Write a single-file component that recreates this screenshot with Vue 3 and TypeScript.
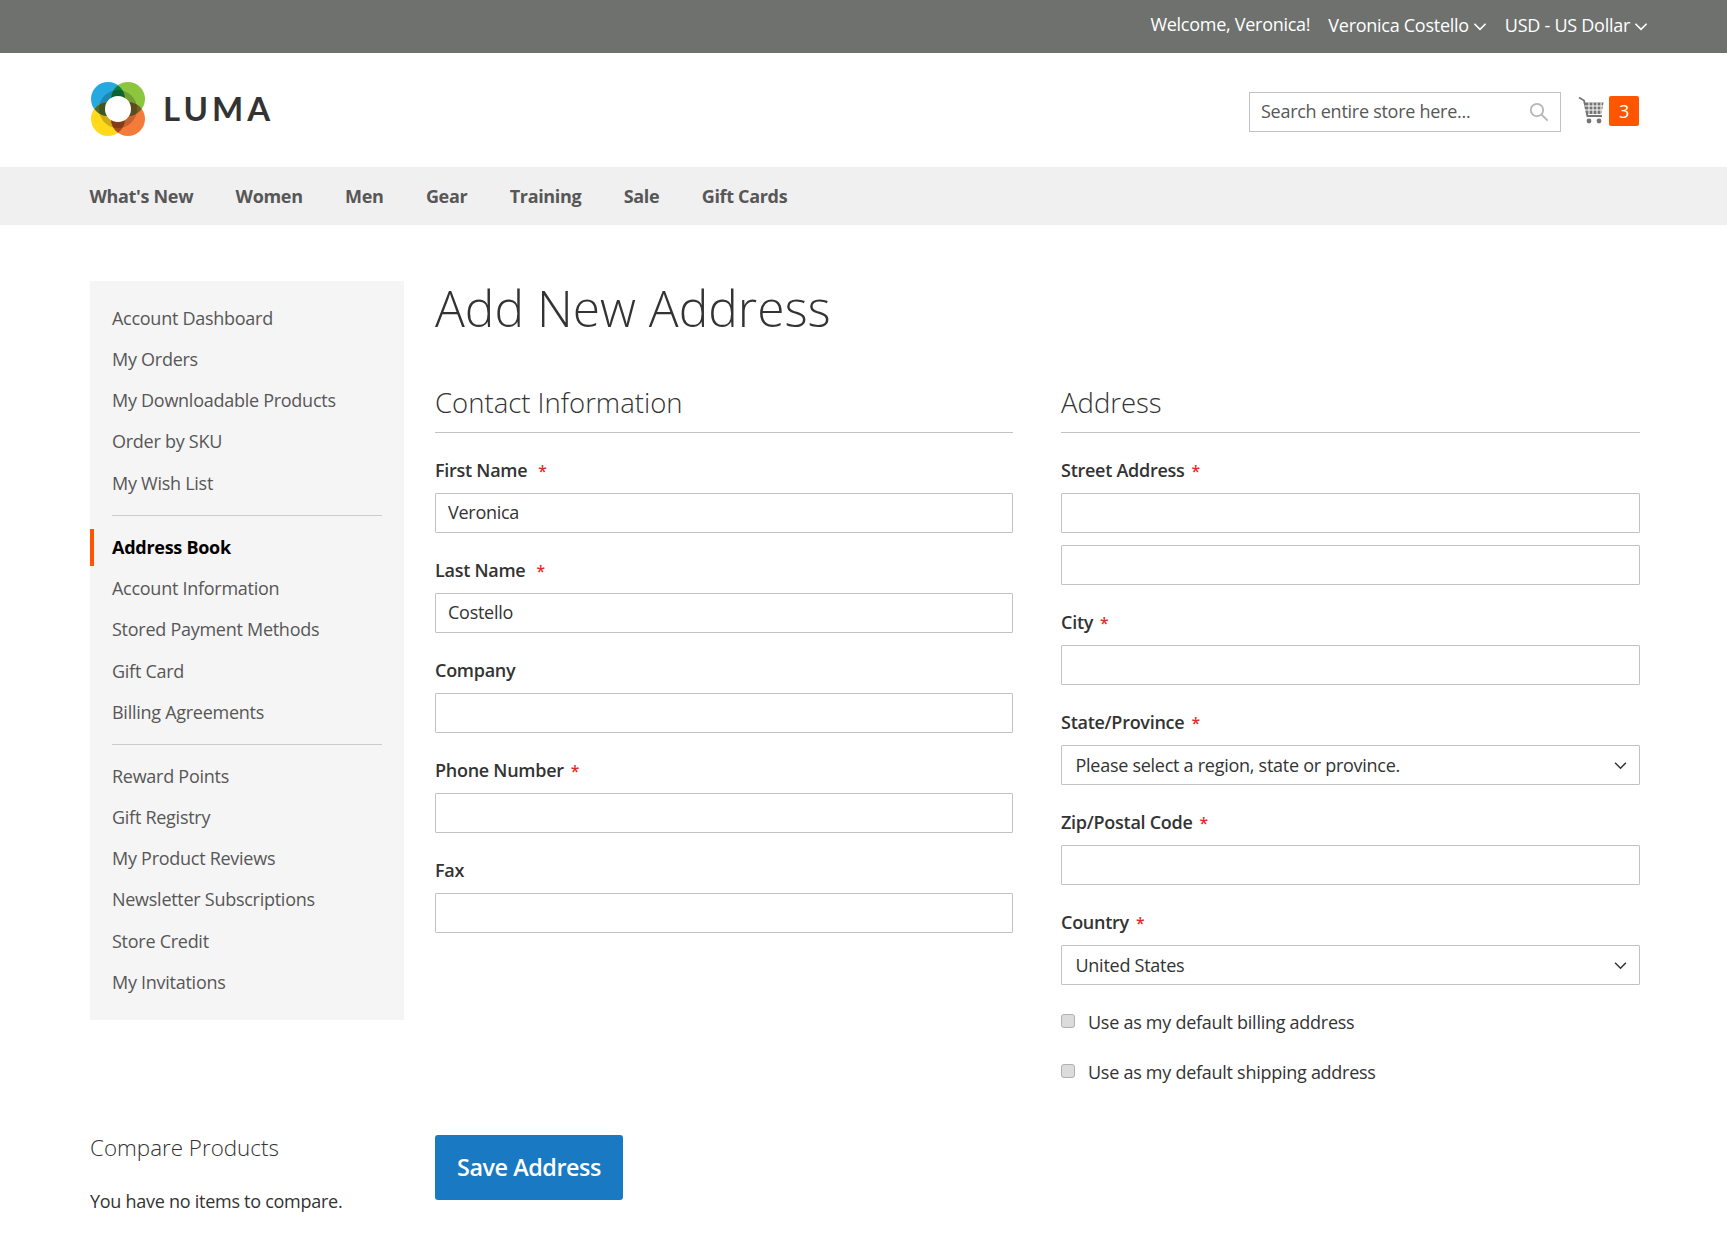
<template>
  <div class="page">
    <div class="topbar">
      <span class="welcome">Welcome, Veronica!</span>
      <span class="switch">Veronica Costello
        <svg class="caret" viewBox="0 0 12 8"><path d="M1 1.5l5 5 5-5" /></svg>
      </span>
      <span class="switch">USD - US Dollar
        <svg class="caret" viewBox="0 0 12 8"><path d="M1 1.5l5 5 5-5" /></svg>
      </span>
    </div>

    <header class="header">
      <div class="logo">
        <svg class="logo-mark" viewBox="0 0 54 54">
          <circle cx="17" cy="17" r="17" fill="#25a9e0" />
          <circle cx="37" cy="17" r="17" fill="#8cc63f" />
          <circle cx="17" cy="37" r="17" fill="#ffd91a" />
          <circle cx="37" cy="37" r="17" fill="#f47b3a" />
          <path d="M27 3.250A17 17 0 0 1 27 30.750A17 17 0 0 1 27 3.250Z" fill="#0e7c3f" />
          <path d="M27 23.250A17 17 0 0 1 27 50.750A17 17 0 0 1 27 23.250Z" fill="#a54a1f" />
          <path d="M3.250 27A17 17 0 0 1 30.750 27A17 17 0 0 1 3.250 27Z" fill="#4f6b2b" />
          <path d="M23.250 27A17 17 0 0 1 50.750 27A17 17 0 0 1 23.250 27Z" fill="#6f5f24" />
          <circle cx="27" cy="27" r="16" fill="none" stroke="#000" stroke-opacity="0.2" stroke-width="6" />
          <circle cx="27" cy="27" r="13" fill="#fff" />
        </svg>
        <span class="logo-text">LUMA</span>
      </div>
      <div class="header-right">
        <div class="search">
          <input class="search-input" placeholder="Search entire store here..." />
          <svg class="search-icon" viewBox="0 0 20 20">
            <circle cx="8" cy="8" r="6.2" />
            <path d="M12.6 12.6l6 6" />
          </svg>
        </div>
        <svg class="cart" viewBox="0 0 26 28">
          <path class="cart-line" d="M1 1.500l5 3 3.400 15.500h14.600" />
          <path class="cart-fill" d="M6.500 6.500h19l-2 11.500H9.200z" />
          <path class="cart-grid" d="M6.500 10h19M7 14h18" />
          <path class="cart-grid" d="M11 6.500v12M15 6.500v12M19 6.500v12M23 6.500v12" />
          <circle class="cart-fill" cx="11" cy="25" r="2.400" />
          <circle class="cart-fill" cx="21" cy="25" r="2.400" />
        </svg>
        <span class="cart-count">3</span>
      </div>
    </header>

    <nav class="mainnav">
      <a v-for="item in navItems" :key="item">{{ item }}</a>
    </nav>

    <div class="content">
      <aside class="side">
        <div class="account-nav">
          <template v-for="(group, i) in accountGroups" :key="i">
            <hr v-if="i > 0" class="nav-sep" />
            <a v-for="link in group" :key="link" class="nav-link" :class="{ current: link === 'Address Book' }">{{ link }}</a>
          </template>
        </div>
        <div class="compare">
          <h3>Compare Products</h3>
          <p>You have no items to compare.</p>
        </div>
      </aside>

      <main class="main">
        <h1 class="title">Add New Address</h1>
        <form class="columns" @submit.prevent>
          <section class="column">
            <h2 class="legend">Contact Information</h2>
            <div v-for="f in contactFields" :key="f.label" class="field">
              <label class="label">{{ f.label }}<span v-if="f.required" class="star" :class="{ wide: f.wide }">*</span></label>
              <input class="input" :value="f.value" />
            </div>
          </section>

          <section class="column">
            <h2 class="legend">Address</h2>
            <div class="field">
              <label class="label">Street Address<span class="star">*</span></label>
              <input class="input" />
              <input class="input second" />
            </div>
            <div class="field">
              <label class="label">City<span class="star">*</span></label>
              <input class="input" />
            </div>
            <div class="field">
              <label class="label">State/Province<span class="star">*</span></label>
              <div class="select-wrap">
                <select class="select"><option>Please select a region, state or province.</option></select>
                <svg class="select-arrow" viewBox="0 0 12 8"><path d="M1 1.5l5 5 5-5" /></svg>
              </div>
            </div>
            <div class="field">
              <label class="label">Zip/Postal Code<span class="star">*</span></label>
              <input class="input" />
            </div>
            <div class="field">
              <label class="label">Country<span class="star">*</span></label>
              <div class="select-wrap">
                <select class="select"><option>United States</option></select>
                <svg class="select-arrow" viewBox="0 0 12 8"><path d="M1 1.5l5 5 5-5" /></svg>
              </div>
            </div>
            <label class="check first"><input type="checkbox" /><span>Use as my default billing address</span></label>
            <label class="check"><input type="checkbox" /><span>Use as my default shipping address</span></label>
          </section>
        </form>
        <button class="save" type="button">Save Address</button>
      </main>
    </div>
  </div>
</template>

<script setup lang="ts">
interface ContactField {
  label: string;
  value: string;
  required: boolean;
  wide?: boolean;
}

const navItems = ["What's New", 'Women', 'Men', 'Gear', 'Training', 'Sale', 'Gift Cards'];

const accountGroups: string[][] = [
  ['Account Dashboard', 'My Orders', 'My Downloadable Products', 'Order by SKU', 'My Wish List'],
  ['Address Book', 'Account Information', 'Stored Payment Methods', 'Gift Card', 'Billing Agreements'],
  ['Reward Points', 'Gift Registry', 'My Product Reviews', 'Newsletter Subscriptions', 'Store Credit', 'My Invitations'],
];

const contactFields: ContactField[] = [
  { label: 'First Name', value: 'Veronica', required: true, wide: true },
  { label: 'Last Name', value: 'Costello', required: true, wide: true },
  { label: 'Company', value: '', required: false },
  { label: 'Phone Number', value: '', required: true },
  { label: 'Fax', value: '', required: false },
];
</script>

<style>
body {
  background: #fff;
}
</style>

<style scoped>
.page {
  font-family: "Open Sans", "Liberation Sans", sans-serif;
  font-size: 18px;
  letter-spacing: -0.27px;
  color: #333;
  height: 1247px;
  overflow: hidden;
}

.topbar {
  height: 53px;
  background: #6e716e;
  color: #fff;
  display: flex;
  justify-content: flex-end;
  align-items: center;
  gap: 18px;
  padding: 0 79px 3px 0;
  box-sizing: border-box;
}

.welcome {
  margin-top: -2px;
}

.switch {
  display: flex;
  align-items: center;
  gap: 4px;
}

.caret {
  width: 14px;
  height: 9px;
  margin-top: 3px;
  fill: none;
  stroke: #fff;
  stroke-width: 1.4;
}

.header {
  height: 114px;
  display: flex;
  justify-content: space-between;
  align-items: center;
  padding: 0 88px 0 90px;
}

.logo {
  display: flex;
  align-items: center;
  gap: 18px;
  margin-left: 1px;
}

.logo-mark {
  width: 54px;
  height: 54px;
  margin-top: -3px;
  display: block;
}

.logo-text {
  font-family: Lato, "Open Sans", sans-serif;
  font-size: 33px;
  font-weight: 700;
  letter-spacing: 4px;
  color: #333;
  margin-top: -5px;
}

.header-right {
  display: flex;
  align-items: center;
  margin-top: 4px;
}

.search {
  width: 312px;
  height: 40px;
  box-sizing: border-box;
  border: 1px solid #c2c2c2;
  display: flex;
  align-items: center;
  margin-right: 17px;
}

.search-input {
  flex: 1;
  min-width: 0;
  height: 100%;
  border: 0;
  outline: 0;
  padding: 0 0 2px 11px;
  box-sizing: border-box;
  font: inherit;
  letter-spacing: inherit;
  color: #333;
  background: transparent;
}

.search-input::placeholder {
  color: #575757;
  opacity: 1;
}

.search-icon {
  width: 20px;
  height: 20px;
  margin-right: 11px;
  fill: none;
  stroke: #b5b5b5;
  stroke-width: 1.8;
}

.cart {
  width: 26px;
  height: 28px;
  margin: -5px 5px 0 0;
}

.cart-line {
  fill: none;
  stroke: #757575;
  stroke-width: 1.8;
}

.cart-fill {
  fill: #757575;
}

.cart-grid {
  fill: none;
  stroke: #fff;
  stroke-width: 1;
}

.cart-count {
  width: 30px;
  height: 30px;
  margin-top: -2px;
  border-radius: 2px;
  background: #ff5501;
  color: #fff;
  text-align: center;
  line-height: 30px;
}

.mainnav {
  height: 58px;
  background: #f0f0f0;
  display: flex;
  align-items: center;
  gap: 42.400px;
  padding-left: 89.500px;
  font-weight: 700;
  letter-spacing: -0.33px;
  color: #575757;
}

.content {
  display: flex;
  padding: 56px 87px 0 90px;
  gap: 31px;
}

.side {
  width: 314px;
  flex: none;
}

.account-nav {
  background: #f5f5f5;
  padding: 16.600px 0 16.800px;
}

.nav-link {
  display: block;
  height: 41.3px;
  line-height: 41.3px;
  padding-left: 22px;
  color: #575757;
}

.nav-link.current {
  font-weight: 700;
  color: #000;
  position: relative;
}

.nav-link.current::before {
  content: "";
  position: absolute;
  left: 0;
  top: 2px;
  bottom: 2px;
  width: 4px;
  background: #ff5501;
}

.nav-sep {
  border: 0;
  border-top: 1px solid #ccc;
  margin: 11px 22px 10.600px;
}

.nav-sep:last-of-type {
  margin-bottom: 10.400px;
}

.compare {
  margin-top: 109px;
}

.compare h3 {
  margin: 0;
  font-size: 22.400px;
  font-weight: 300;
  line-height: 38px;
  letter-spacing: 0;
}

.compare p {
  margin: 16px 0 0;
  line-height: 36px;
}

.main {
  flex: 1;
  min-width: 0;
}

.title {
  margin: 0;
  padding-top: 1px;
  font-size: 49.700px;
  font-weight: 300;
  line-height: 52px;
  letter-spacing: 0;
}

.columns {
  display: grid;
  grid-template-columns: 578px 579px;
  gap: 48px;
  margin-top: 44px;
}

.legend {
  margin: 0 0 20px;
  font-size: 27.500px;
  font-weight: 300;
  line-height: 50px;
  height: 54px;
  letter-spacing: 0;
  border-bottom: 1px solid #c2c2c2;
}

.field {
  margin-bottom: 20px;
}

.label {
  display: block;
  height: 40px;
  line-height: 34px;
  font-weight: 600;
}

.star {
  color: #e02b27;
  font-size: 15.600px;
  margin-left: 7px;
}

.star.wide {
  margin-left: 11px;
}

.input,
.select {
  display: block;
  width: 100%;
  height: 40px;
  box-sizing: border-box;
  border: 1px solid #c2c2c2;
  background: #fff;
  font: inherit;
  letter-spacing: inherit;
  color: #333;
  padding: 0 12px 2px;
  outline: 0;
  border-radius: 1px;
}

.input.second {
  margin-top: 12px;
}

.select {
  appearance: none;
  padding: 0 13.500px;
}

.select-wrap {
  position: relative;
}

.select-arrow {
  position: absolute;
  right: 13px;
  top: 16px;
  width: 13px;
  height: 9px;
  fill: none;
  stroke: #333;
  stroke-width: 1.4;
  pointer-events: none;
}

.check {
  display: flex;
  align-items: center;
  height: 50px;
}

.check.first {
  margin-top: -8px;
}

.check input {
  appearance: none;
  width: 14px;
  height: 14px;
  margin: 0 13px 2px 0;
  background: #dcdcdc;
  border: 1px solid #b0b0b0;
  border-radius: 3px;
}

.save {
  display: block;
  width: 188px;
  height: 65px;
  margin-top: 38px;
  padding: 0 0 2px;
  border: 0;
  border-radius: 3px;
  background: #1979c3;
  color: #fff;
  font-family: inherit;
  font-size: 23.400px;
  font-weight: 600;
  letter-spacing: -0.46px;
}
</style>
